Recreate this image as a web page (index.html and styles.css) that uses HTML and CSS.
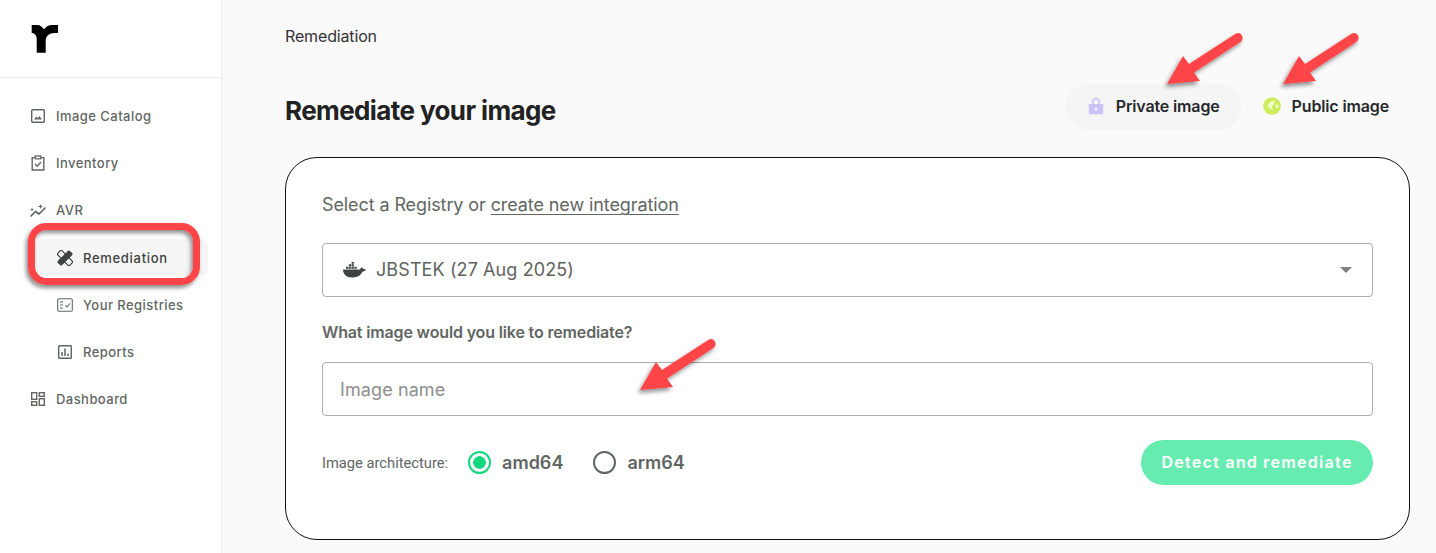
FILE: index.html
```html
<!DOCTYPE html>
<html lang="en">
<head>
    <meta charset="UTF-8">
    <meta name="viewport" content="width=device-width, initial-scale=1.0">
    <title>Remediation</title>
    <link rel="stylesheet" href="styles.css">
</head>
<body>
<div class="app">
    <aside class="sidebar">
        <div class="logo">
            <svg width="28" height="28" viewBox="0 0 28 28"><path fill="#000" d="M.7 0H6.500C9 0 11 2 13 4.200C15 1.500 18 0 21 0H27V8H24C18 8 14.700 11 14.700 16V27.700H5.700V14C5.700 10.500 3.500 8 .7 8Z"/></svg>
        </div>
        <nav class="nav">
            <a class="nav-item">
                <svg class="nav-icon" viewBox="0 0 16 16"><rect x="1.700" y="1.700" width="12.600" height="12.600" rx="1" fill="none" stroke="currentColor" stroke-width="1.400"/><path fill="currentColor" d="M4 11.500L6.300 8.500L7.800 10.300L9.500 8L12 11.500Z"/></svg>
                <span>Image Catalog</span>
            </a>
            <a class="nav-item">
                <svg class="nav-icon" viewBox="0 0 16 16"><path fill="none" stroke="currentColor" stroke-width="1.400" d="M5 2.600H2.200V15H13.800V2.600H11"/><rect x="5.200" y="1" width="5.600" height="2.800" fill="none" stroke="currentColor" stroke-width="1.300"/><path fill="none" stroke="currentColor" stroke-width="1.400" d="M5 9L7.200 11.200L11 7"/></svg>
                <span>Inventory</span>
            </a>
            <a class="nav-item">
                <svg class="nav-icon avr" viewBox="0 0 18 16"><path fill="none" stroke="currentColor" stroke-width="1.700" stroke-linecap="round" stroke-linejoin="round" d="M2 14L6.500 9.500L10 12L16 6"/><path fill="currentColor" d="M3 5.500L3.600 7L5 7.500L3.600 8L3 9.500L2.400 8L1 7.500L2.400 7ZM11.500 2L12.200 3.800L14 4.500L12.200 5.200L11.500 7L10.800 5.200L9 4.500L10.800 3.800Z"/></svg>
                <span>AVR</span>
            </a>
            <a class="nav-item sub active">
                <svg class="nav-icon" viewBox="0 0 16 16"><g transform="rotate(45 8 8)"><rect x="-.5" y="5" width="17" height="6" rx="1.500" fill="none" stroke="currentColor" stroke-width="1.200"/><rect x="5" y="-.5" width="6" height="17" rx="1.500" fill="currentColor"/></g></svg>
                <span>Remediation</span>
            </a>
            <a class="nav-item sub">
                <svg class="nav-icon" viewBox="0 0 16 16"><rect x=".7" y="1.700" width="14.600" height="12.600" rx="1.400" fill="none" stroke="currentColor" stroke-width="1.100"/><path fill="none" stroke="currentColor" stroke-width="1.100" d="M3 5H6M3 8H6M3 11H6M8.500 8.500L10 10L13 6.500"/></svg>
                <span>Your Registries</span>
            </a>
            <a class="nav-item sub">
                <svg class="nav-icon" viewBox="0 0 16 16"><rect x="1.700" y="1.700" width="12.600" height="12.600" rx=".8" fill="none" stroke="currentColor" stroke-width="1.400"/><path fill="none" stroke="currentColor" stroke-width="1.500" d="M5 12V8M8 12V4.500M11 12V9.500"/></svg>
                <span>Reports</span>
            </a>
            <a class="nav-item">
                <svg class="nav-icon" viewBox="0 0 16 16"><g fill="none" stroke="currentColor" stroke-width="1.400"><rect x="1.700" y="1.700" width="5" height="6.600"/><rect x="9.300" y="1.700" width="5" height="3.600"/><rect x="1.700" y="10.700" width="5" height="3.600"/><rect x="9.300" y="7.700" width="5" height="6.600"/></g></svg>
                <span>Dashboard</span>
            </a>
        </nav>
    </aside>

    <main class="main">
        <div class="breadcrumb">Remediation</div>
        <div class="title-row">
            <h1>Remediate your image</h1>
            <div class="tabs">
                <div class="tab selected">
                    <svg width="18" height="18" viewBox="0 0 18 18"><path fill="#c9c3fb" d="M5 7V5C5 2.400 6.800 .7 9 .7S13 2.400 13 5V7H15C15.700 7 16.200 7.500 16.200 8.200V16C16.200 16.900 15.700 17.300 15 17.300H3C2.300 17.300 1.800 16.900 1.800 16V8.200C1.800 7.500 2.300 7 3 7ZM6.600 7H11.400V5C11.400 3.400 10.300 2.300 9 2.300S6.600 3.400 6.600 5Z"/><circle cx="9" cy="12" r="1.500" fill="#f5f5f5"/></svg>
                    <span>Private image</span>
                </div>
                <div class="tab">
                    <svg width="18" height="18" viewBox="0 0 18 18"><circle cx="9" cy="9" r="8.800" fill="#cdee5c"/><path fill="#f4fbd5" d="M3.500 9.500L7.500 5L12 3.500L11 7L9 8.500L9.500 13.500L7 11.500L6 9.500ZM12.500 7.500L15.500 8L14.800 11.500L12.500 10Z"/></svg>
                    <span>Public image</span>
                </div>
            </div>
        </div>

        <section class="card">
            <p class="registry-line">Select a Registry or <a class="link">create new integration</a></p>
            <div class="field select">
                <svg width="24" height="16" viewBox="0 0 24 16"><path fill="#3f4240" d="M1 7.500H18C18.500 6 19.500 5.500 20.200 5.300C20.700 6 21 6.500 21 7C22 6.800 23 7 24 7.500C23 9 21.800 9.500 20.500 9.600C19 13.500 15.500 15.500 10.500 15.500C4 15.500 1.200 12 1 7.500Z"/><path fill="#3f4240" d="M4 4.700H6.300V6.800H4ZM6.800 4.700H9.100V6.800H6.800ZM9.600 4.700H11.900V6.800H9.600ZM12.400 4.700H14.700V6.800H12.400ZM6.800 2.200H9.100V4.200H6.800ZM9.600 2.200H11.900V4.200H9.600ZM9.600 0H11.900V1.800H9.600Z"/></svg>
                <span class="select-value">JBSTEK (27 Aug 2025)</span>
                <span class="caret"></span>
            </div>
            <label class="field-label">What image would you like to remediate?</label>
            <div class="field input"><span>Image name</span></div>
            <div class="form-footer">
                <span class="arch-label">Image architecture:</span>
                <div class="radio checked"><span class="radio-dot"></span>amd64</div>
                <div class="radio"><span class="radio-dot"></span>arm64</div>
                <button class="submit">Detect and remediate</button>
            </div>
        </section>
    </main>
</div>

<!-- annotations drawn on top of the screenshot -->
<svg class="annotations" width="1436" height="553" viewBox="0 0 1436 553">
    <defs>
        <filter id="shadow" x="-30%" y="-30%" width="160%" height="160%">
            <feDropShadow dx="-2" dy="3" stdDeviation="2" flood-color="#000" flood-opacity=".45"/>
        </filter>
    </defs>
    <g filter="url(#shadow)" fill="#ff4547">
        <rect x="31.500" y="226.500" width="165" height="55" rx="15" fill="none" stroke="#ff4547" stroke-width="7"/>
        <path d="M1167 84L1183 56L1189 64L1236 33.500C1241 31 1245 38 1241 41.500L1194 72.500L1200 81Z"/>
        <path d="M1283 84L1299 56L1305 64L1352 33.500C1357 31 1361 38 1357 41.500L1310 72.500L1316 81Z"/>
        <path d="M640 390L656 362L662 370L709 339.500C714 337 718 344 714 347.500L667 378.500L673 387Z"/>
    </g>
</svg>
</body>
</html>
```

FILE: styles.css
```css
* {
    box-sizing: border-box;
}
body {
    margin: 0;
    height: 553px;
    overflow: hidden;
    position: relative;
    font-family: Inter, "Liberation Sans", sans-serif;
    background-color: #fafafa;
    color: #616663;
}
.app {
    display: flex;
    height: 100%;
}
.sidebar {
    width: 222px;
    flex-shrink: 0;
    background-color: white;
    border-right: 1px solid #ebebeb;
}
.logo {
    height: 78px;
    padding: 25px 0 0 31px;
    border-bottom: 1px solid #ebebeb;
}
.nav {
    display: flex;
    flex-direction: column;
    padding-top: 14px;
}
.nav-item {
    display: flex;
    align-items: center;
    gap: 10px;
    height: 47px;
    padding-left: 30px;
    font-size: 13px;
    font-weight: 500;
    letter-spacing: .45px;
    color: #616663;
}
.nav-item.sub {
    padding-left: 57px;
}
.nav-item.active {
    height: 37px;
    margin: 6px 13px 5px 35px;
    padding-left: 22px;
    border-radius: 8px;
    background-color: #f5f5f5;
    color: #3f4240;
    letter-spacing: .7px;
}
.nav-icon {
    width: 16px;
    height: 16px;
    flex-shrink: 0;
}
.nav-icon.avr {
    width: 18px;
    margin: 0 -1px;
}
.main {
    flex: 1;
    padding: 0 26px 0 63px;
}
.breadcrumb {
    padding-top: 28px;
    font-size: 16px;
    line-height: 17px;
    letter-spacing: -.15px;
    color: #333;
}
.title-row {
    display: flex;
    justify-content: space-between;
    margin-top: 39px;
    height: 73px;
}
.title-row h1 {
    margin: 11px 0 0;
    font-size: 26px;
    line-height: 32px;
    font-weight: 700;
    letter-spacing: -.6px;
    color: #222;
}
.tabs {
    display: flex;
    height: 46px;
}
.tab {
    display: flex;
    align-items: center;
    gap: 11px;
    padding: 0 21px 2px 22px;
    border-radius: 23px;
    font-size: 16px;
    letter-spacing: -.14px;
    font-weight: 600;
    color: #26282b;
}
.tab.selected {
    background-color: #f5f5f5;
}
.card {
    height: 383px;
    padding: 36px 36px 0;
    background-color: white;
    border: 1px solid #111;
    border-radius: 32px;
}
.registry-line {
    margin: 0 0 28px;
    font-size: 18px;
    line-height: 21px;
    letter-spacing: -.1px;
}
.link {
    text-decoration: underline;
    text-underline-offset: 3px;
    text-decoration-thickness: 1px;
}
.field {
    display: flex;
    align-items: center;
    height: 54px;
    border: 1px solid #adadad;
    border-radius: 4px;
}
.select {
    padding: 0 20px 0 19px;
    gap: 10px;
    color: #5e6360;
}
.select-value {
    flex: 1;
    font-size: 18px;
    letter-spacing: .1px;
    margin-bottom: 2px;
}
.caret {
    width: 0;
    height: 0;
    border-left: 6px solid transparent;
    border-right: 6px solid transparent;
    border-top: 6px solid #808080;
}
.field-label {
    display: block;
    margin: 27px 0 21px;
    font-size: 16px;
    line-height: 17px;
    letter-spacing: -.15px;
    font-weight: 600;
}
.input {
    padding-left: 17px;
    color: #8e8e8e;
    font-size: 18px;
    letter-spacing: .1px;
}
.form-footer {
    display: flex;
    align-items: center;
    height: 45px;
    margin-top: 24px;
}
.arch-label {
    font-family: Roboto, sans-serif;
    font-size: 14.700px;
    margin-right: 20px;
}
.radio {
    display: flex;
    align-items: center;
    gap: 11px;
    margin-right: 30px;
    font-size: 18px;
    font-weight: 600;
}
.radio-dot {
    width: 23px;
    height: 23px;
    border-radius: 50%;
    border: 2px solid #616663;
    background-color: white;
}
.radio.checked .radio-dot {
    border-color: #0fd87f;
    background: radial-gradient(circle, #0fd87f 0 6px, white 6.500px);
}
.submit {
    margin-left: auto;
    width: 232px;
    height: 45px;
    padding: 0 0 2px;
    border: 0;
    border-radius: 23px;
    background-color: #66ebb0;
    color: #f3fdf8;
    font-family: inherit;
    font-size: 16px;
    font-weight: 700;
    letter-spacing: 1.200px;
}
.annotations {
    position: absolute;
    top: 0;
    left: 0;
    pointer-events: none;
}
```
